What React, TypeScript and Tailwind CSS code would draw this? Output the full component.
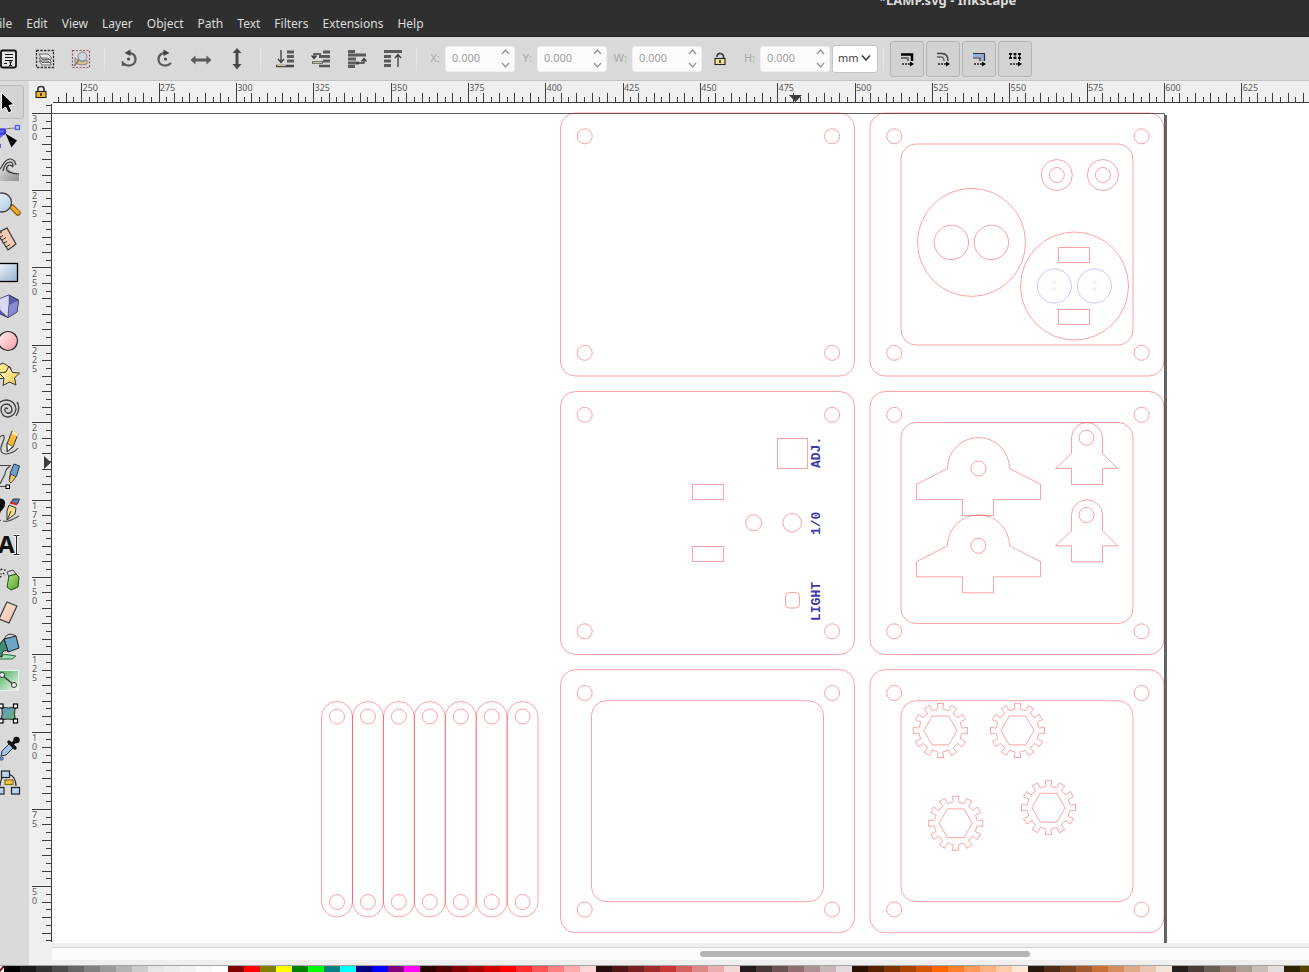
import React from "react";

const INK = "#3c3c3c";
const PX_PER_MM = 1082.8 / 350;

/* ---------- Menu bar ---------- */

const MENUS = ["File", "Edit", "View", "Layer", "Object", "Path", "Text", "Filters", "Extensions", "Help"];

function Header() {
  return (
    <header className="relative flex h-[37px] shrink-0 flex-col justify-end overflow-hidden border-b border-[#222222] bg-[#2f2f2f] text-[#dcdcdc]">
      <h1 className="absolute -top-2 left-[879px] text-[13px] leading-4 font-bold whitespace-nowrap">*LAMP.svg - Inkscape</h1>
      <nav className="-ml-[14px] flex h-[22px] items-start">
        {MENUS.map((m) => (
          <button key={m} type="button" className="px-[7px] text-[12px] leading-5">
            {m}
          </button>
        ))}
      </nav>
    </header>
  );
}

/* ---------- Controls bar ---------- */

function Icon({ children }: { children: React.ReactNode }) {
  return (
    <svg width="24" height="24" viewBox="-12 -12 24 24" fill="none" stroke={INK} strokeWidth="1.5" aria-hidden="true">
      {children}
    </svg>
  );
}

const Bars = ({ xs }: { xs: number[][] }) => (
  <g stroke="#5a5a5a" strokeWidth="3">
    {xs.map(([x1, x2, y], i) => (
      <path key={i} d={`M${x1} ${y}H${x2}`} />
    ))}
  </g>
);

const SELECT_ICONS: [string, React.ReactNode][] = [
  ["Select all", <g key="a"><rect x="-8" y="-8.500" width="15" height="17" rx="1.500" fill="#e4e4e4" stroke="#111" strokeWidth="1.800" /><path d="M-4-4.500H4M-4-1.500H4M-4 1.500H4M-5 4.500h3M0 3h3M0 6.500h3M1.500 3v3.500" stroke="#111" strokeWidth="1.200" /></g>],
  ["Select all in all layers", <g key="b"><rect x="-8.500" y="-8.500" width="17" height="17" stroke="#333" strokeWidth="1.300" strokeDasharray="2.500 1.200" /><path d="M-6 2H3l3 3v1H-3zM-6-1H3l3 3v1.500H-3zM-6-5H3l3 3v2.500H-3z" fill="#e9e9e9" stroke="#666" strokeWidth="1" /></g>],
  ["Deselect", <g key="c"><rect x="-8.500" y="-8.500" width="17" height="17" stroke="#8a5c5c" strokeWidth="1.200" strokeDasharray="2 1.500" /><path d="M-6-1L1 3 6 1v4L0 6l-6-2z" fill="#d8c48c" stroke="#888" strokeWidth="1" /><circle cx="1.500" cy="-2.500" r="4.500" fill="#cdd5dc" stroke="#888" strokeWidth="1" /><path d="M-2 1l-5 6" stroke="#777" /></g>],
];

const TURN_ICONS: [string, React.ReactNode][] = [
  ["Rotate 90 CCW", <g key="a"><path d="M-2-6C3-7 7-3.500 6.500 1 6 6-1 9-6 4" stroke="#5a5a5a" strokeWidth="2.200" /><path d="M1.500-9.500l-6 3.500 6 3z" fill="#444" stroke="none" /><path d="M-6.500 2v4h3" stroke="#555" /><circle r="1.500" cx="-.500" cy="0" fill="#444" stroke="none" /></g>],
  ["Rotate 90 CW", <g key="b"><path d="M2-6C-3-7-7-3.500-6.500 1-6 6 1 9 6 4" stroke="#5a5a5a" strokeWidth="2.200" /><path d="M-1.500-9.500l6 3.500-6 3z" fill="#444" stroke="none" /><circle r="1.500" cx=".500" cy="0" fill="#444" stroke="none" /></g>],
  ["Flip horizontal", <path key="c" d="M-10.500 1l5-4.500v3H5.500v-3l5 4.500-5 4.500v-3H-5.500v3z" fill="#5a5a5a" stroke="none" />],
  ["Flip vertical", <path key="d" d="M0-11l4.500 5H1.500V5h3L0 10.500-4.500 5h3V-6h-3z" fill="#4a4a4a" stroke="none" />],
];

const ORDER_ICONS: [string, React.ReactNode][] = [
  ["Lower to bottom", <g key="a"><Bars xs={[[2, 9, -7], [2, 9, -2.5], [2, 9, 2]]} /><path d="M-9 7H9" stroke="#444" strokeWidth="2.500" /><path d="M-8 6.500H1" stroke="#cdbf9a" strokeWidth="1" /><path d="M-4-9V3M-7 0l3 3.500L-1 0" strokeWidth="1.300" /></g>],
  ["Lower one step", <g key="b"><Bars xs={[[2, 9, -7], [-2, 9, -2.5], [2, 9, 2]]} /><path d="M-9 3.500H2M-2 7H9" stroke="#555" strokeWidth="2.500" /><path d="M-8 3.500H1" stroke="#cdbf9a" strokeWidth="1" /><path d="M0-5h-7v4M-9.500-3.500L-7-.500l2.500-3" strokeWidth="1.300" /></g>],
  ["Raise one step", <g key="c"><Bars xs={[[-9, -2, -7.5], [-9, 9, -4], [-9, -1, 0], [-9, 2, 4], [-9, -2, 7.5]]} /><path d="M-1 4H7V1M4.500 2.500L7-.500l2.500 3" strokeWidth="1.300" /></g>],
  ["Raise to top", <g key="d"><Bars xs={[[-9, 9, -7.5], [-9, -2, -2.5], [-9, -2, 2], [-9, -2, 6.5]]} /><path d="M5 8V-4M2-1l3-3.500L8-1" strokeWidth="1.300" /></g>],
];

function IconGroup({ icons }: { icons: [string, React.ReactNode][] }) {
  return (
    <>
      {icons.map(([label, art]) => (
        <button key={label} type="button" aria-label={label} className="flex h-9 w-9 shrink-0 items-center justify-center">
          <Icon>{art}</Icon>
        </button>
      ))}
    </>
  );
}

const Separator = () => <div className="mr-[6px] ml-[5px] h-6 w-px shrink-0 bg-[#e6e6e6]" />;

function Spin({ name, label, wide }: { name: string; label: string; wide?: boolean }) {
  return (
    <>
      <label htmlFor={name} className={`${wide ? "w-[25px]" : "w-[22px]"} shrink-0 pr-[5px] text-right text-[11px] text-[#a6a6a6]`}>
        {label}
      </label>
      <div className="flex h-[26px] w-[70px] shrink-0 items-center rounded-[3px] border border-[#eeeeee] bg-[#fbfbfb]">
        <input id={name} defaultValue="0.000" disabled className="w-[55px] bg-transparent pl-[6px] text-[11px] text-[#a0a0a0]" />
        <div className="flex flex-col gap-[6px]">
          {["M1 5l3.500-4L8 5", "M1 1l3.500 4L8 1"].map((d, i) => (
            <button key={d} type="button" disabled aria-label={`${i ? "Decrease" : "Increase"} ${label}`}>
              <svg className="block" width="9" height="7" fill="none" stroke="#999" strokeWidth="1.400">
                <path d={d} />
              </svg>
            </button>
          ))}
        </div>
      </div>
    </>
  );
}

const Dots = () => <path d="M-5 5h2M-2 5h2M1 5h3" stroke="#222" strokeWidth="1.300" />;
const ArrowHead = () => <path d="M3 2.500L7 5 3 7.500z" fill="#000" stroke="none" />;

const AFFECT_ICONS: [string, React.ReactNode][] = [
  ["Scale stroke width", <g key="a"><path d="M-6-4.500H5V2" stroke="#000" strokeWidth="2.500" /><path d="M-6-1H1V2" stroke="#555" strokeWidth="1.500" /></g>],
  ["Scale rounded corners", <g key="b"><path d="M-6-5.500H-1Q5-5.500 5 2" stroke="#444" strokeWidth="1.600" /><path d="M-6-2H-2Q1-2 1 2" stroke="#666" strokeWidth="1.400" /></g>],
  ["Move gradients", <g key="c"><path d="M-6-6H6V2H2V-2H-6z" fill="#8fb0dc" stroke="none" /><path d="M-6-5.500H5.500V2M-6-1H1V2" stroke="#333" strokeWidth="1.200" /></g>],
  ["Move patterns", <g key="d" stroke="#111"><path d="M-6-5H6M-6-1H6" strokeWidth="2" strokeDasharray="3 1.500" /><path d="M-4.500-5V0M0-5V0M4.500-5V2" strokeWidth="1" /></g>],
];

function Padlock({ open }: { open?: boolean }) {
  return (
    <svg width="12" height="14" viewBox="0 0 12 14" fill="none" aria-hidden="true">
      <path d={open ? "M3 5V3.500Q4 1 6.500 1.500T9.500 4V7" : "M3 7V4Q3 1.500 6 1.500T9 4V7"} stroke="#333" strokeWidth="1.600" />
      <rect x="1" y="6.500" width="10" height="6" fill={open ? "#e9e3a0" : "#edb63c"} stroke="#222" strokeWidth="1.100" />
      <path d="M6 8v3" stroke="#222" strokeWidth="1.500" />
    </svg>
  );
}

function ControlsBar() {
  return (
    <div role="toolbar" className="flex h-[44px] shrink-0 items-center overflow-hidden border-b border-[#c3c3c3] bg-[#d9d9d9]">
      <div className="-ml-[9px] flex shrink-0 items-center">
        <IconGroup icons={SELECT_ICONS} />
        <Separator />
        <IconGroup icons={TURN_ICONS} />
        <Separator />
        <IconGroup icons={ORDER_ICONS} />
        <Separator />
        <Spin name="x" label="X:" />
        <Spin name="y" label="Y:" />
        <Spin name="w" label="W:" wide />
        <button type="button" aria-label="Lock width and height" className="flex h-9 w-9 items-center justify-center">
          <Padlock open />
        </button>
        <Spin name="h" label="H:" />
        <div className="relative ml-[2px]">
          <select aria-label="Units" className="h-[28px] w-[46px] appearance-none rounded-[3px] border border-[#c4c4c4] bg-white pl-[5px] text-[11px] text-[#444444]">
            <option>mm</option>
          </select>
          <svg className="pointer-events-none absolute top-[10px] right-[7px]" width="10" height="8" fill="none" stroke="#444" strokeWidth="1.800">
            <path d="M1 1.500l4 4.500 4-4.500" />
          </svg>
        </div>
        <Separator />
        <div className="flex gap-[2px]">
          {AFFECT_ICONS.map(([label, art]) => (
            <button key={label} type="button" aria-label={label} className="flex h-9 w-[34px] items-center justify-center rounded-[3px] border border-[#b5b5b5] bg-[#d2d2d2]">
              <Icon>
                {art}
                <Dots />
                <ArrowHead />
              </Icon>
            </button>
          ))}
        </div>
      </div>
    </div>
  );
}

/* ---------- Toolbox ---------- */

const TOOLS: [string, React.ReactNode][] = [
  ["Selector", <path key="t" d="M1.500 6.500V24l4-3 3 6 3.500-1.800-3-5.700 5-1z" fill="#000" stroke="#fff" strokeWidth="1" />],
  ["Node editor", <g key="t"><path d="M-4 14Q2 8 16 8" stroke="#777" strokeWidth="1.200" /><path d="M-4 20L6 11" stroke="#6a6af0" strokeWidth="3" /><rect x="-1" y="9" width="6" height="5" fill="#5c5cf0" stroke="#1515c8" /><rect x="15.500" y="5.500" width="4" height="4" fill="#c8c8ff" stroke="#5a5af0" strokeWidth="1.300" /><path d="M5.500 13.500l11.500 7-5.500 7z" fill="#000" /><rect x="-2" y="24" width="3" height="4" fill="#5c5cf0" /></g>],
  ["Tweak", <g key="t"><path d="M-4 27V18C2 16 3 6 10 5q5 0 6 6l-2 1q-2-4-4-2-3 3 1 7 3 2 8 2v8z" fill="url(#wave)" /><path d="M-2 17C3 14 3 5 10 5q5 0 6 6M3 17Q5 8 10 8q3 0 3 5M13 13q-4-4-6 0t5 6q3 1 7 1" stroke="#333" strokeWidth="1.200" /></g>],
  ["Zoom", <g key="t"><path d="M12 19l6 6" stroke="#8a5a10" strokeWidth="5.500" strokeLinecap="round" /><path d="M12.500 19.500l5.500 5" stroke="#f0a830" strokeWidth="3.600" strokeLinecap="round" /><circle cx="2" cy="14.500" r="9.500" fill="url(#glass)" stroke="#444" strokeWidth="1.300" /></g>],
  ["Measure", <g key="t"><path d="M7 6l9 16-8 6L-3 11z" fill="#f3c9b0" stroke="#333" strokeWidth="1.200" /><path d="M-2 12l4-2M0 15l3-1.500M2 18l4-2.500M4 21l3-1.500M6 25l4-2.500" stroke="#333" strokeWidth="1" /></g>],
  ["Rectangle", <rect key="t" x="-4" y="7.500" width="21.500" height="18" fill="url(#sheet)" stroke="#000" strokeWidth="1.300" />],
  ["3D box", <g key="t" stroke="#2b2b55" strokeWidth="1"><path d="M9 5l9.500 5-1.500 12-9 5.500L-4 22-1 9z" fill="#5e5eae" /><path d="M9 5L-1 9l1 11 8 7.500 1-13z" fill="#d9d9f3" strokeOpacity=".4" /><path d="M9 14.500l9.500-4.500-1.500 12-9 5.500z" fill="#8a8ad0" strokeOpacity=".4" /></g>],
  ["Ellipse", <circle key="t" cx="8" cy="17" r="9.500" fill="url(#pink)" stroke="#222" strokeWidth="1.200" />],
  ["Star", <g key="t" stroke="#333" strokeWidth="1"><path d="M3 5l8 5-2 10-14 1V9z" fill="#fbe98a" /><path d="M9 8l3.500 6.500 7 .500-5 5 1.500 7-6.500-3-6.500 3.500 1-7.500-5-5 7-1z" fill="url(#gold)" /></g>],
  ["Spiral", <path key="t" d="M8 17q-2-2-3 0t2 4q4 1 5-3 0-5-5-6-6 0-6 6 1 7 7 7 7-1 8-8-1-8-9-9-6 0-10 5M16 24q5-8 1-14" stroke="#444" strokeWidth="1.400" />],
  ["Pencil", <g key="t"><path d="M-3 14q8-9 7-1L1 21q-1 7 5 7 8-1 12-6" stroke="#444" strokeWidth="1.200" /><path d="M12 5l6 3-5 13-6 5v-8z" fill="#f7b935" stroke="#333" strokeWidth="1" /><path d="M13 4.500l5.500 3-1 3-6-3z" fill="#f6e5bd" /><path d="M7 17l5.500 3.500-5 5z" fill="#fff" stroke="#333" strokeWidth=".800" /></g>],
  ["Bezier", <g key="t"><path d="M-2 5.500H11M10 6Q5 10 5 14L0 24M-2 26.500H8" stroke="#444" strokeWidth="1.100" /><path d="M14 4l5.500 2-3 10-5 5-2-2 1-7z" fill="#6d9fca" stroke="#234" strokeWidth="1" /><path d="M11 14l5 3-5 6-2-2z" fill="#eec96b" stroke="#333" strokeWidth=".800" /><rect x="6" y="25" width="3.500" height="3.500" fill="#fff" stroke="#000" strokeWidth="1" /></g>],
  ["Calligraphy", <g key="t"><path d="M-4 5q8-2 9 3T1 17q-3 6 0 10h-5z" fill="#0d0d0d" /><path d="M3 27q4 2 16-5" stroke="#555" strokeWidth="1.200" /><path d="M13 5h6.500l-2 5-6.500-1z" fill="#557fa8" stroke="#222" strokeWidth=".800" /><path d="M10 8.500l7 2" stroke="#d03030" strokeWidth="2" /><path d="M9 11l7 3-1 6-8 6V17z" fill="#f7df8f" stroke="#333" strokeWidth="1" /><path d="M11 17l-3.500 8" stroke="#333" strokeWidth="1" /></g>],
  ["Text", <g key="t"><text x="-2" y="25" fontSize="24" fontWeight="700" fill="#111" stroke="none">A</text><path d="M13 7.500h2.500q1 0 1 1v17q0 1-1 1H13M20 7.500h-2.500q-1 0-1 1M20 26.500h-2.500q-1 0-1-1" stroke="#fff" strokeWidth="3" /><path d="M13.500 7.500h2q1 0 1 1v17q0 1-1 1h-2M19.500 7.500h-2q-1 0-1 1M19.500 26.500h-2q-1 0-1-1" stroke="#222" strokeWidth="1.100" /></g>],
  ["Spray", <g key="t"><path d="M-2 9l3-1M-1 12h3M1 7l2 1M3 11l2 2M0 15l2-1M4 8h2" stroke="#222" strokeWidth="1.400" strokeDasharray="1.500 1" /><path d="M7 10l6-2 3 4-7 3z" fill="#d8d8d8" stroke="#444" strokeWidth="1" /><path d="M9 14l7-2 3 3-1 10-7 3-4-3z" fill="url(#can)" stroke="#274d12" strokeWidth="1" /></g>],
  ["Eraser", <path key="t" d="M7 6l10 4-8 17-10-4z" fill="url(#rubber)" stroke="#333" strokeWidth="1.100" />],
  ["Paint bucket", <g key="t"><path d="M-4 26q10-3 20 0l-4 3H-4z" fill="#9fe0b4" stroke="#2b6b40" strokeWidth="1" /><path d="M4 9l12-3 3 12-11 4z" fill="#6fa3c4" stroke="#123" strokeWidth="1" /><path d="M4 9q-8 8-6 17l4 1q-1-8 6-6z" fill="#3f8f72" stroke="#222" strokeWidth="1" /><path d="M4 9Q8 1 16 6" stroke="#333" strokeWidth="1" /></g>],
  ["Gradient", <g key="t"><rect x="-4" y="6.500" width="22.500" height="20" fill="url(#green)" stroke="#e4f1e5" strokeWidth="1" /><path d="M2 11l12 10" stroke="#333" strokeWidth="1.200" /><circle cx="2" cy="11" r="2.500" fill="#f2f2f2" stroke="#333" /><circle cx="14" cy="21" r="2.500" fill="#f2f2f2" stroke="#333" /></g>],
  ["Mesh gradient", <g key="t"><path d="M1 8q8 4 15 0-3 8 0 15-8-4-16 0 4-8 1-15z" fill="url(#mesh)" stroke="#333" strokeWidth="1.100" />{[[-1, 6], [13.500, 6], [-1, 21], [13.500, 21]].map(([x, y]) => <rect key={`${x}-${y}`} x={x} y={y} width="4" height="4" fill="#fff" stroke="#000" strokeWidth="1.200" />)}</g>],
  ["Dropper", <g key="t"><path d="M1 24L2 19 10 11l4 4-8 8z" fill="#a9c4e6" stroke="#234" strokeWidth="1" /><path d="M9 10l6 6M12 12l5-4" stroke="#111" strokeWidth="3.500" strokeLinecap="round" /><circle cx="16.500" cy="8" r="3.200" fill="#111" /><circle cx="1.500" cy="26.500" r="1.800" fill="#6f8fc8" stroke="#345" strokeWidth=".700" /></g>],
  ["Connector", <g key="t" stroke="#222" strokeWidth="1.200"><path d="M4 9Q0 14 0 20M9 8q7 3 7 12" /><rect x="1.500" y="5" width="8" height="6.500" fill="#b9d3f3" /><rect x="5" y="14" width="8" height="4.500" fill="#f7c944" stroke="#8a6a10" /><rect x="-4" y="21.500" width="8" height="6.500" fill="#b9d3f3" /><rect x="11.500" y="21.500" width="8" height="6.500" fill="#b9d3f3" /></g>],
];

const GRADIENTS: [string, string, string][] = [
  ["wave", "#f4f4f4", "#8f8f8f"],
  ["glass", "#f6fafd", "#a9c7e2"],
  ["sheet", "#f4f8fb", "#93b1ce"],
  ["pink", "#fff0f2", "#f79aa4"],
  ["gold", "#fff8cf", "#f5cf45"],
  ["can", "#b8e68c", "#4f9e22"],
  ["rubber", "#fbe9e0", "#f2b9a0"],
  ["green", "#3fa552", "#f3fbf3"],
  ["mesh", "#5f8fd6", "#6cb96c"],
];

function Toolbox() {
  return (
    <aside aria-label="Toolbox" className="flex w-[29px] shrink-0 flex-col overflow-hidden bg-[#d9d9d9] pt-1">
      <svg width="0" height="0" className="absolute" aria-hidden="true">
        <defs>
          {GRADIENTS.map(([id, from, to]) => (
            <linearGradient key={id} id={id} x1="0" y1="0" x2="1" y2="1">
              <stop offset="0" stopColor={from} />
              <stop offset="1" stopColor={to} />
            </linearGradient>
          ))}
        </defs>
      </svg>
      {TOOLS.map(([label, art], i) => (
        <button
          key={label}
          type="button"
          aria-label={label}
          className={`-ml-[11px] flex h-[34px] w-[35px] shrink-0 rounded-[3px] border ${i === 0 ? "border-[#b9b9b9] bg-[#d3d3d3]" : "border-transparent"}`}
        >
          <svg className="block shrink-0" width="34" height="34" viewBox="-10 0 34 34" fill="none" aria-hidden="true">
            {art}
          </svg>
        </button>
      ))}
    </aside>
  );
}

/* ---------- Rulers ---------- */

function ticks(from: number, to: number) {
  return Array.from({ length: to - from + 1 }, (_, i) => from + i);
}

function TopRuler() {
  return (
    <svg className="block h-[22px] w-full" aria-label="Horizontal ruler">
      <g transform="translate(-52 -81)" shapeRendering="crispEdges">
        {ticks(-3, 220).map((n) => {
          const x = Math.floor(81.7 + n * 2.5 * PX_PER_MM) + 0.5;
          const top = n % 10 === 0 ? 83 : n % 2 === 0 ? 93 : 97;
          return <path key={n} d={`M${x} ${top}V102`} stroke={INK} />;
        })}
        <path d="M53 102.500H4000" stroke={INK} />
      </g>
      <g transform="translate(-52 -81)">
        {ticks(0, 22).map((n) => (
          <text key={n} x={82.5 + n * 25 * PX_PER_MM} y="91" fontSize="9" fill="#5a5a5a">
            {250 + n * 25}
          </text>
        ))}
        <path d="M789 95h13l-6.500 7z" fill={INK} />
      </g>
    </svg>
  );
}

function SideRuler() {
  return (
    <svg className="block h-full w-[23px]" aria-label="Vertical ruler">
      <g transform="translate(-29 -103)" shapeRendering="crispEdges">
        {ticks(-1, 107).map((n) => {
          const y = Math.floor(113.3 + n * 2.5 * PX_PER_MM) + 0.5;
          const left = n % 10 === 0 ? 32 : n % 2 === 0 ? 42 : 46;
          return <path key={n} d={`M${left} ${y}H51`} stroke={INK} />;
        })}
        <path d="M51.500 104V942" stroke={INK} />
      </g>
      <g transform="translate(-29 -103)">
        {ticks(0, 10).map((n) => (
          <text key={n} y={122 + n * 25 * PX_PER_MM} fontSize="9" fill="#5a5a5a">
            {String(300 - n * 25)
              .split("")
              .map((d, i) => (
                <tspan key={i} x="32" dy={i ? 9 : 0}>
                  {d}
                </tspan>
              ))}
          </text>
        ))}
        <path d="M44 456v13l7-6.500z" fill={INK} />
      </g>
    </svg>
  );
}

/* ---------- Drawing ---------- */

function Plate({ x, y, frame }: { x: number; y: number; frame?: boolean }) {
  return (
    <g>
      <rect x={x} y={y} width="294" height="263" rx="15" />
      {frame && <rect x={x + 31} y={y + 31} width="232" height="201" rx="15" />}
      {[24.2, 271.6].map((dx) => [23.3, 239.8].map((dy) => <circle key={`${dx}-${dy}`} cx={x + dx} cy={y + dy} r="7.500" />))}
    </g>
  );
}

function gearPath() {
  const at = (r: number, deg: number) => {
    const a = (deg * Math.PI) / 180;
    return `${(r * Math.sin(a)).toFixed(2)} ${(-r * Math.cos(a)).toFixed(2)}`;
  };
  let d = "";
  for (let i = 0; i < 12; i++) {
    const c = i * 30;
    d += `${i ? "L" : "M"}${at(24.8, c - 7)}L${at(27.2, c - 6.5)}L${at(27.2, c + 6.5)}L${at(24.8, c + 7)}`;
    d += `Q${at(23, c + 5.5)} ${at(21.8, c + 7)}Q${at(20.8, c + 9)} ${at(21.3, c + 12)}L${at(21.3, c + 18)}Q${at(20.8, c + 21)} ${at(21.8, c + 23)}Q${at(23, c + 24.5)} ${at(24.8, c + 23)}`;
  }
  return `${d}Z`;
}

const GEAR = gearPath();

function Gear({ x, y }: { x: number; y: number }) {
  return (
    <g transform={`translate(${x} ${y})`}>
      <path d={GEAR} />
      <path d="M-16.600 0L-8.300-14.400H8.300L16.600 0 8.300 14.400H-8.300z" />
    </g>
  );
}

function Drawing() {
  return (
    <svg className="block h-full w-full" aria-label="LAMP.svg drawing">
      <g transform="translate(-52 -103)">
        <path d="M52 113.500H1164.500V943" fill="none" stroke="#606060" />
        <path d="M1165 115h2V943h-2z" fill="#666" />
        <g fill="none" stroke="#f00000" strokeOpacity=".36">
          <Plate x={560.5} y={113} />
          <Plate x={870} y={113} frame />
          <Plate x={560.5} y={391.5} />
          <Plate x={870} y={391.5} frame />
          <Plate x={560.5} y={669.7} frame />
          <Plate x={870} y={669.7} frame />

          {[1056.800, 1102.900].map((cx) => [15.500, 7.500].map((r) => <circle key={`${cx}-${r}`} cx={cx} cy="175" r={r} />))}
          <circle cx="971.500" cy="242.400" r="54" />
          <circle cx="951.400" cy="242.400" r="17.200" />
          <circle cx="991.400" cy="242.400" r="17.200" />
          <circle cx="1074.500" cy="286" r="54" />
          <rect x="1058.500" y="247.500" width="31" height="15" />
          <rect x="1058.500" y="309.500" width="31" height="15" />

          <rect x="777.500" y="438.500" width="30" height="30" />
          <rect x="692.500" y="484.500" width="31" height="15" />
          <rect x="692.500" y="546.500" width="31" height="15" />
          <circle cx="753.600" cy="522.800" r="8" />
          <circle cx="792.200" cy="522.800" r="9.300" />
          <rect x="785.500" y="592.500" width="14" height="15.500" rx="4" />

          {[0, 77.300].map((dy) => (
            <g key={dy} transform={`translate(0 ${dy})`}>
              <path d="M947.500 468.500A31 31 0 0 1 1009.500 468.500L1040.500 484.300V499.500H993.500V515.500H962.500V499.500H916.500V484.300Z" />
              <circle cx="978.400" cy="468.500" r="7.500" />
              <path d="M1071.500 438A15.500 15.500 0 0 1 1102.500 438V453.500L1117.500 468.500H1102.500V484.500H1071.500V468.500H1055.500L1071.500 453.500Z" />
              <circle cx="1086.500" cy="437.700" r="7.500" />
            </g>
          ))}

          <Gear x={940.400} y={730.500} />
          <Gear x={1017.500} y={730.500} />
          <Gear x={1048.500} y={807.700} />
          <Gear x={955.700} y={823.300} />

          {ticks(0, 6).map((n) => (
            <g key={n} transform={`translate(${n * 30.930} 0)`}>
              <rect x="321.500" y="701.500" width="31" height="215.500" rx="15.500" />
              <circle cx="337" cy="716.500" r="7.500" />
              <circle cx="337" cy="902" r="7.500" />
            </g>
          ))}
        </g>
        <g fill="none" stroke="#0000ff" strokeOpacity=".22">
          <circle cx="1054.400" cy="286" r="17" />
          <circle cx="1094.400" cy="286" r="17" />
        </g>
        <g fill="none" stroke="#ff0000" strokeOpacity=".12">
          {[1054.400, 1094.400].map((cx) => [282.400, 289.500].map((cy) => <circle key={`${cx}-${cy}`} cx={cx} cy={cy} r="1.500" />))}
        </g>
        <g fill="#3a3aa6" fontSize="13" fontWeight="700" style={{ fontFamily: '"Liberation Mono", monospace' }}>
          <text transform="translate(820 468) rotate(-90)">ADJ.</text>
          <text transform="translate(820 535) rotate(-90)">1/0</text>
          <text transform="translate(820 621) rotate(-90)">LIGHT</text>
        </g>
      </g>
    </svg>
  );
}

/* ---------- Palette ---------- */

const PALETTE = (
  "000000 1a1a1a 333333 4d4d4d 666666 808080 999999 b3b3b3 cccccc e6e6e6 ececec f2f2f2 f9f9f9 ffffff " +
  "800000 ff0000 808000 ffff00 008000 00ff00 008080 00ffff 000080 0000ff 800080 ff00ff " +
  "2b0000 550000 800000 aa0000 d40000 ff0000 ff2a2a ff5555 ff8080 ffaaaa ffd5d5 " +
  "280b0b 501616 782121 a02c2c c83737 d35f5f de8787 e9afaf f4d7d7 " +
  "241c1c 483737 6c5353 916f6f ac9393 c8b7b7 e3dbdb " +
  "2b1100 552200 803300 aa4400 d45500 ff6600 ff7f2a ff9955 ffb380 ffccaa ffe6d5 " +
  "28170b 502d16 784421 a05a2c c87137 d38d5f deaa87 e9c6af f4e3d7 " +
  "241f1c 483e37 6c5d53 917c6f ac9d93 c8beb7 e3dedb 2b2200 554400 806600 aa8800 d4aa00 ffcc00"
).split(" ");

function Palette() {
  return (
    <div aria-label="Colour palette" className="flex h-[7px] shrink-0 overflow-hidden border-t border-[#a3a3a3]">
      <button type="button" aria-label="No colour" className="-ml-3 w-4 shrink-0 bg-white">
        <svg className="block" width="16" height="6">
          <path d="M10 7l6-7" stroke="#7c1010" strokeWidth="2" />
        </svg>
      </button>
      {PALETTE.map((c, i) => (
        <button key={i} type="button" aria-label={`#${c}`} className="w-4 shrink-0" style={{ backgroundColor: `#${c}` }} />
      ))}
    </div>
  );
}

/* ---------- Window ---------- */

export default function App() {
  return (
    <div className="flex h-screen flex-col overflow-hidden bg-[#efefef] font-['Noto_Sans',sans-serif]">
      <Header />
      <ControlsBar />
      <div className="flex min-h-0 flex-1">
        <Toolbox />
        <main className="flex min-w-0 flex-1 flex-col">
          <div className="flex h-[22px] shrink-0">
            <button type="button" aria-label="Lock guides" className="flex w-[23px] shrink-0 items-center justify-center">
              <Padlock />
            </button>
            <div className="min-w-0 flex-1">
              <TopRuler />
            </div>
          </div>
          <div className="flex min-h-0 flex-1">
            <div className="w-[23px] shrink-0">
              <SideRuler />
            </div>
            <div className="min-w-0 flex-1 bg-white">
              <Drawing />
            </div>
          </div>
          <div className="shrink-0 pt-1 pb-[5px] pl-[23px]">
            <div className="flex h-[13px] items-center border-t border-[#d6d6d6] bg-[#fcfcfc]">
              <div className="ml-[648px] h-[6px] w-[330px] rounded-full bg-[#b5b5b5]" />
            </div>
          </div>
        </main>
      </div>
      <Palette />
    </div>
  );
}
